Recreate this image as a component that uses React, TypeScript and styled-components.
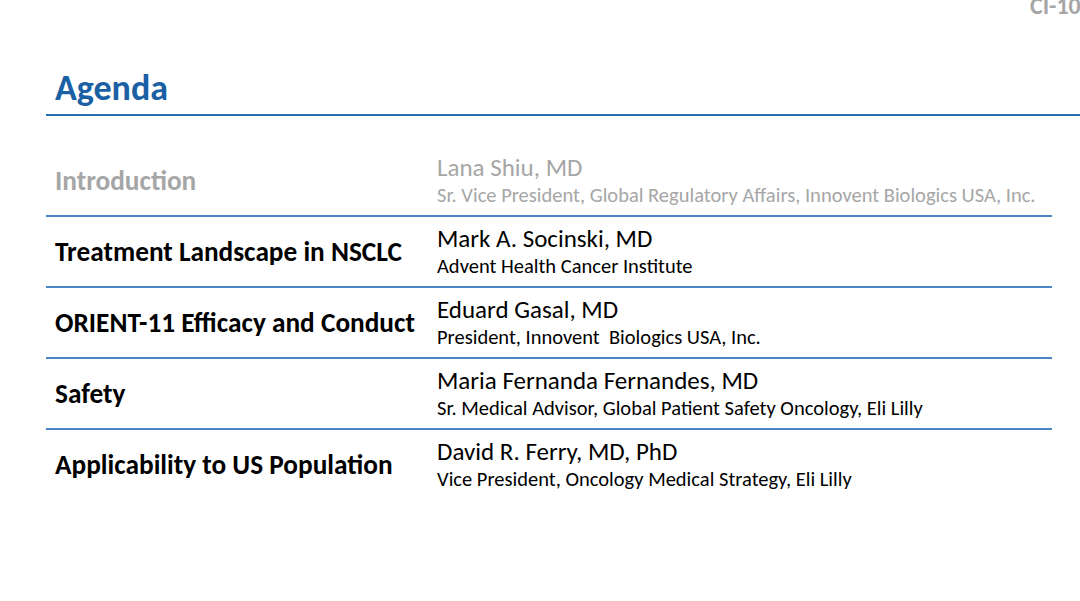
import React from "react";
import styled, { createGlobalStyle } from "styled-components";

const Global = createGlobalStyle`
  html, body { margin: 0; padding: 0; background: #fff; }
  body { font-family: Carlito, Calibri, Lato, "Open Sans", sans-serif; }
`;

const Page = styled.div`
  width: 1080px;
  height: 601px;
  overflow: hidden;
  background: #fff;
  display: flex;
  flex-direction: column;
`;

const PageNum = styled.div`
  height: 18px;
  padding-left: 1030px;
  margin-top: -7px;
  white-space: nowrap;
  font-weight: 700;
  font-size: 24px;
  line-height: 26px;
  color: #a6a6a6;
`;

const Title = styled.h1`
  margin: 55px 0 0 55px;
  font-size: 36px;
  line-height: 44px;
  font-weight: 700;
  color: #1b5fa5;
`;

const TitleRule = styled.div`
  margin: 4px 0 0 46px;
  height: 2px;
  background: #2a6cb0;
`;

const Table = styled.div`
  margin: 30px 0 0 46px;
  width: 1006px;
  display: flex;
  flex-direction: column;
`;

const Row = styled.div<{ $last?: boolean }>`
  box-sizing: border-box;
  height: 71px;
  display: grid;
  grid-template-columns: 382px 1fr;
  align-items: center;
  padding-left: 9px;
  border-bottom: 2px solid ${(p) => (p.$last ? "transparent" : "#4a86c4")};
`;

const Topic = styled.div<{ $muted?: boolean }>`
  font-size: 27.3px;
  font-weight: 700;
  color: ${(p) => (p.$muted ? "#a6a6a6" : "#000")};
  white-space: nowrap;
`;

const Speaker = styled.div<{ $muted?: boolean }>`
  display: flex;
  flex-direction: column;
  color: ${(p) => (p.$muted ? "#a6a6a6" : "#000")};
  white-space: nowrap;
`;

const Name = styled.div`
  font-size: 25px;
  line-height: 28px;
`;

const Role = styled.div`
  font-size: 20.5px;
  line-height: 26px;
`;

const rows = [
  {
    topic: "Introduction",
    name: "Lana Shiu, MD",
    role: "Sr. Vice President, Global Regulatory Affairs, Innovent Biologics USA, Inc.",
    muted: true,
  },
  {
    topic: "Treatment Landscape in NSCLC",
    name: "Mark A. Socinski, MD",
    role: "Advent Health Cancer Institute",
  },
  {
    topic: "ORIENT-11 Efficacy and Conduct",
    name: "Eduard Gasal, MD",
    role: "President, Innovent\u00a0 Biologics USA, Inc.",
  },
  {
    topic: "Safety",
    name: "Maria Fernanda Fernandes, MD",
    role: "Sr. Medical Advisor, Global Patient Safety Oncology, Eli Lilly",
  },
  {
    topic: "Applicability to US Population",
    name: "David R. Ferry, MD, PhD",
    role: "Vice President, Oncology Medical Strategy, Eli Lilly",
  },
];

export default function App() {
  return (
    <Page>
      <Global />
      <PageNum>CI-10</PageNum>
      <Title>Agenda</Title>
      <TitleRule />
      <Table>
        {rows.map((r, i) => (
          <Row key={r.topic} $last={i === rows.length - 1}>
            <Topic $muted={r.muted}>{r.topic}</Topic>
            <Speaker $muted={r.muted}>
              <Name>{r.name}</Name>
              <Role>{r.role}</Role>
            </Speaker>
          </Row>
        ))}
      </Table>
    </Page>
  );
}
